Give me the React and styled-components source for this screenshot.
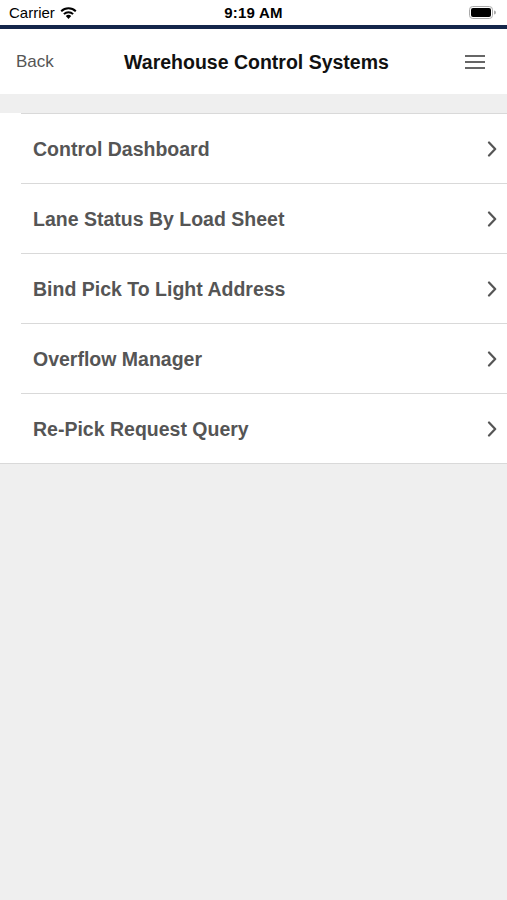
import React from "react";
import styled, { createGlobalStyle } from "styled-components";

const GlobalStyle = createGlobalStyle`
  html, body {
    margin: 0;
    padding: 0;
    background: #efefef;
  }
  body {
    font-family: "Liberation Sans", Arial, sans-serif;
    -webkit-font-smoothing: antialiased;
  }
`;

const Screen = styled.div`
  width: 507px;
  min-height: 900px;
  background: #efefef;
  display: flex;
  flex-direction: column;
`;

const StatusBar = styled.div`
  height: 25px;
  background: #ffffff;
  display: grid;
  grid-template-columns: 1fr auto 1fr;
  align-items: center;
  padding: 0 9px;
  font-size: 15px;
  color: #000;
  border-bottom: 4px solid #14264a;
`;

const Carrier = styled.div`
  display: flex;
  align-items: center;
  gap: 5px;
`;

const Clock = styled.div`
  font-weight: bold;
  letter-spacing: 0.2px;
`;

const BatteryWrap = styled.div`
  justify-self: end;
  display: flex;
  align-items: center;
  padding-right: 2px;
`;

const NavBar = styled.div`
  height: 65px;
  background: #ffffff;
  display: grid;
  grid-template-columns: 80px 1fr 80px;
  align-items: center;
`;

const BackLink = styled.div`
  padding-left: 16px;
  font-size: 17px;
  color: #555555;
`;

const Title = styled.div`
  text-align: center;
  font-size: 19.5px;
  font-weight: bold;
  color: #111111;
  padding: 2px 0 0 6px;
`;

const MenuButton = styled.div`
  justify-self: end;
  padding-right: 22px;
  display: flex;
  flex-direction: column;
  gap: 4px;
`;

const MenuLine = styled.span`
  display: block;
  width: 20px;
  height: 2px;
  background: #666666;
`;

const Spacer = styled.div`
  height: 19px;
  background: #efefef;
`;

const List = styled.div`
  background: #ffffff;
  border-bottom: 1px solid #d9d9d9;
  padding-left: 21px;
`;

const Row = styled.div`
  height: 69px;
  display: flex;
  align-items: center;
  justify-content: space-between;
  border-top: 1px solid #d9d9d9;
  padding-left: 12px;
  padding-right: 10px;
`;

const RowLabel = styled.span`
  font-size: 19.5px;
  font-weight: bold;
  color: #555555;
  padding-top: 2px;
`;

const Chevron = () => (
  <svg width="10" height="16" viewBox="0 0 10 16">
    <path d="M2 1.5 L8.2 8 L2 14.5" fill="none" stroke="#555" strokeWidth="2.2" strokeLinecap="round" strokeLinejoin="round" />
  </svg>
);

const Wifi = () => (
  <svg width="17" height="12" viewBox="0 0 17 12">
    <path d="M8.5 12 L5.8 9.1 A3.9 3.9 0 0 1 11.2 9.1 Z" fill="#000" />
    <path d="M3.9 7.1 A6.6 6.6 0 0 1 13.1 7.1" fill="none" stroke="#000" strokeWidth="2" />
    <path d="M1.2 4.2 A10.5 10.5 0 0 1 15.8 4.2" fill="none" stroke="#000" strokeWidth="2" />
  </svg>
);

const Battery = () => (
  <svg width="27" height="13" viewBox="0 0 27 13">
    <rect x="0.5" y="0.5" width="23" height="12" rx="3.2" fill="none" stroke="#aaa" strokeWidth="1" />
    <rect x="2" y="2" width="20" height="9" rx="2" fill="#000" />
    <path d="M25 4.5 A2 2 0 0 1 25 8.5 Z" fill="#aaa" />
  </svg>
);

const items = [
  "Control Dashboard",
  "Lane Status By Load Sheet",
  "Bind Pick To Light Address",
  "Overflow Manager",
  "Re-Pick Request Query",
];

export default function App() {
  return (
    <>
      <GlobalStyle />
      <Screen>
        <StatusBar>
          <Carrier>
            Carrier <Wifi />
          </Carrier>
          <Clock>9:19 AM</Clock>
          <BatteryWrap>
            <Battery />
          </BatteryWrap>
        </StatusBar>
        <NavBar>
          <BackLink>Back</BackLink>
          <Title>Warehouse Control Systems</Title>
          <MenuButton>
            <MenuLine />
            <MenuLine />
            <MenuLine />
          </MenuButton>
        </NavBar>
        <Spacer />
        <List>
          {items.map((label) => (
            <Row key={label}>
              <RowLabel>{label}</RowLabel>
              <Chevron />
            </Row>
          ))}
        </List>
      </Screen>
    </>
  );
}
